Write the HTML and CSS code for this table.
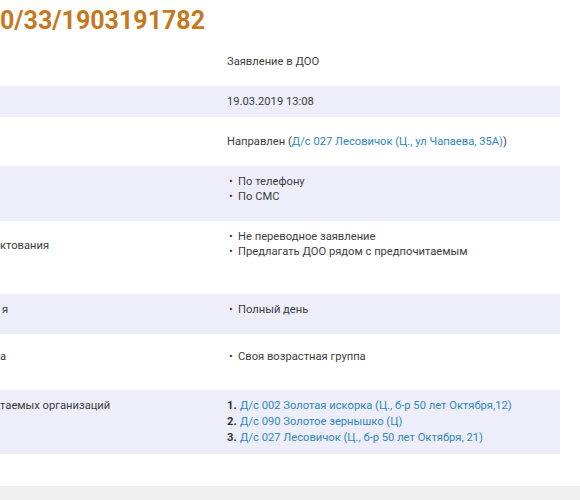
FILE: index.html
```html
<!DOCTYPE html>
<html lang="ru">
<head>
<meta charset="utf-8">
<title>Заявление</title>
<link rel="stylesheet" href="styles.css">
</head>
<body>
<h1 class="title">0/33/1903191782</h1>
<div class="sheet">
  <div class="row row--airy">
    <div class="label"></div>
    <div class="value">Заявление в ДОО</div>
  </div>
  <div class="row row--stripe">
    <div class="label"></div>
    <div class="value">19.03.2019 13:08</div>
  </div>
  <div class="row row--airy">
    <div class="label"></div>
    <div class="value">Направлен (<a class="link" href="#">Д/с 027 Лесовичок (Ц., ул Чапаева, 35А)</a>)</div>
  </div>
  <div class="row row--stripe">
    <div class="label"></div>
    <div class="value">
      <ul class="bullets">
        <li>По телефону</li>
        <li>По СМС</li>
      </ul>
    </div>
  </div>
  <div class="row row--params">
    <div class="label label--low">ктования</div>
    <div class="value">
      <ul class="bullets">
        <li>Не переводное заявление</li>
        <li>Предлагать ДОО рядом с предпочитаемым</li>
      </ul>
    </div>
  </div>
  <div class="row row--stripe">
    <div class="label label--tail">я</div>
    <div class="value">
      <ul class="bullets">
        <li>Полный день</li>
      </ul>
    </div>
  </div>
  <div class="row row--group">
    <div class="label">а</div>
    <div class="value">
      <ul class="bullets">
        <li>Своя возрастная группа</li>
      </ul>
    </div>
  </div>
  <div class="row row--stripe">
    <div class="label">таемых организаций</div>
    <div class="value">
      <ol class="numbers">
        <li><a class="link" href="#">Д/с 002 Золотая искорка (Ц., б-р 50 лет Октября,12)</a></li>
        <li><a class="link" href="#">Д/с 090 Золотое зернышко (Ц)</a></li>
        <li><a class="link" href="#">Д/с 027 Лесовичок (Ц., б-р 50 лет Октября, 21)</a></li>
      </ol>
    </div>
  </div>
</div>
<div class="footer"></div>
</body>
</html>
```
FILE: styles.css
```css
html, body {
  margin: 0;
  padding: 0;
  background: #ffffff;
}

body {
  font-family: Roboto, "Noto Sans", sans-serif;
  font-size: 11.2px;
  line-height: 15px;
  color: #3d3d3d;
  overflow: hidden;
}

.title {
  margin: 7px 0 2px 0;
  font-size: 25px;
  line-height: 28px;
  font-weight: 700;
  color: #c5781e;
}

.sheet {
  width: 560px;
}

.row {
  display: grid;
  grid-template-columns: 227px 1fr;
  align-items: start;
  padding: 8px 0;
  box-sizing: border-box;
}

.row--stripe {
  background: #eeeefa;
}

.row--airy {
  padding: 17px 0;
}

.row--params {
  min-height: 73px;
}

.row--group {
  padding: 15px 0 17px 0;
}

.label {
  white-space: nowrap;
}

.label--low {
  margin-top: 9px;
}

.label--tail {
  padding-left: 2px;
}

.link {
  color: #2f88b9;
  text-decoration: none;
}

.bullets,
.numbers {
  list-style: none;
  margin: 0 0 9px 0;
  padding: 0;
}

.bullets li {
  display: flex;
}

.bullets li::before {
  content: "•";
  width: 9px;
  padding-left: 2px;
  flex: none;
}

.numbers {
  margin: 0;
  counter-reset: pick;
}

.numbers li {
  display: flex;
  line-height: 16px;
  counter-increment: pick;
}

.numbers li::before {
  content: counter(pick) ".";
  font-weight: 700;
  width: 13px;
  flex: none;
  color: #333333;
}

.footer {
  margin-top: 32px;
  height: 80px;
  background: #efefef;
}
```
